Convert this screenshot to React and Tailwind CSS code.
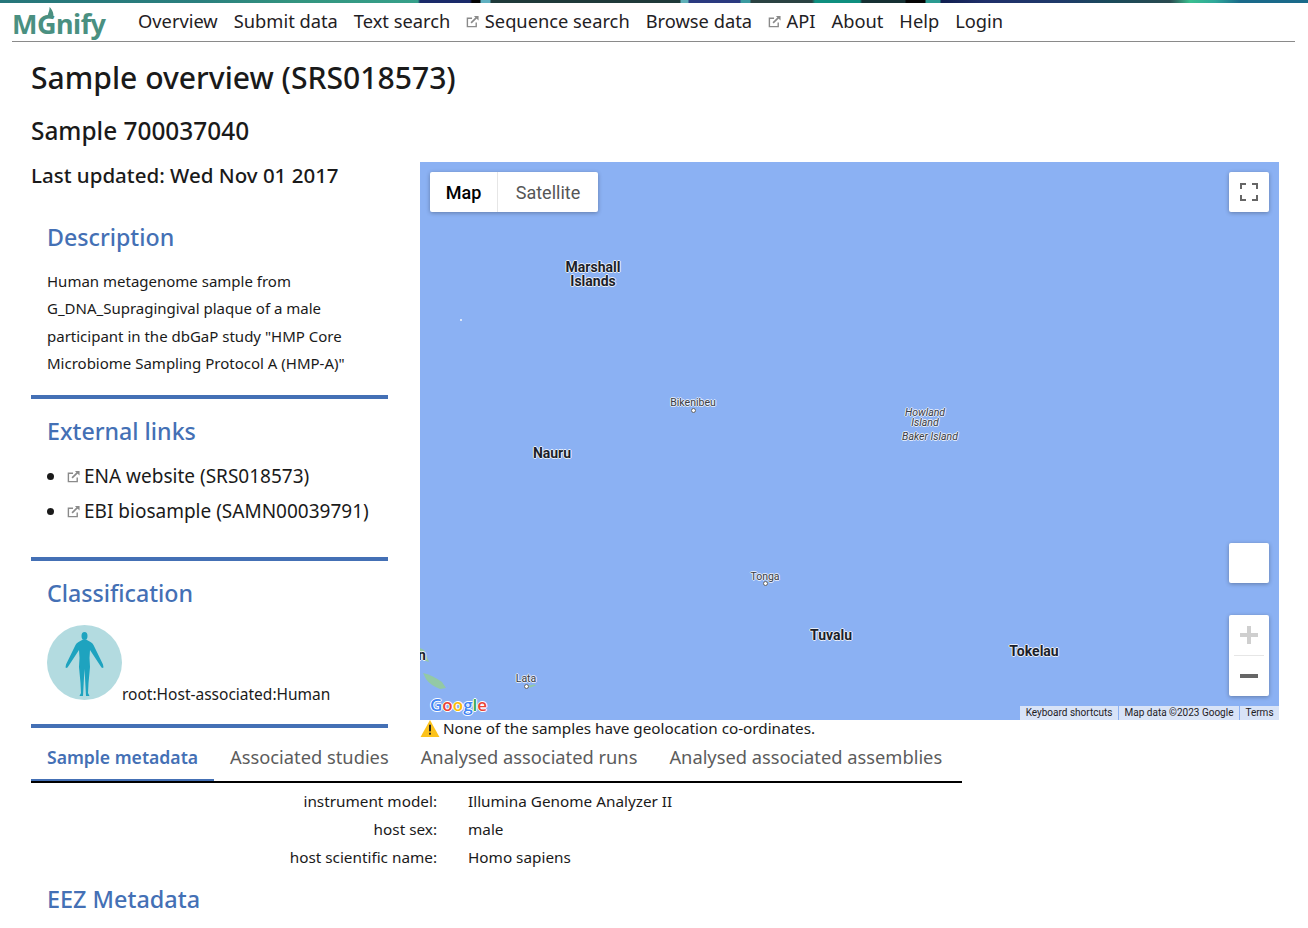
function ExtIcon({ className = "" }) {
  return (
    <svg viewBox="0 0 14 14" className={"inline-block w-[13px] h-[13px] shrink-0 " + className} fill="none">
      <path d="M11 8v4.500H1.500V3.500h5" stroke="#8a8a8a" strokeWidth="1.500" />
      <path d="M5.500 8.500 11.500 2.500" stroke="#8a8a8a" strokeWidth="1.800" />
      <path d="M8.500 1h5v5z" fill="#8a8a8a" />
    </svg>
  );
}

function Logo() {
  return (
    <div className="relative w-[94px] h-[34px] font-bold text-[27px] leading-[34px] text-[#4a9081] whitespace-nowrap">
      <span className="tracking-[-0.5px]">MGnify</span>
      <svg viewBox="0 0 10 12" className="absolute left-[34px] top-[0px] w-[9px] h-[11px]">
        <path d="M2 12C1 8 4 6 4 0c3 3 5 7 4 12z" fill="#4a9081" />
      </svg>
    </div>
  );
}

function NavItem({ children, ext }) {
  return (
    <a className="flex items-center gap-[5.500px] text-[#1f2124]">
      {ext && <ExtIcon className="mt-[1px]" />}
      <span>{children}</span>
    </a>
  );
}

function SectionTitle({ children }) {
  return <h3 className="text-[#4470b5] text-[23.200px] leading-[30px] font-medium">{children}</h3>;
}

function Divider() {
  return <div className="h-[4px] bg-[#4470b5]" />;
}

function HumanIcon() {
  return (
    <svg viewBox="0 0 75 75" className="w-[75px] h-[75px] shrink-0">
      <circle cx="37.500" cy="37.500" r="37.500" fill="#b3dbe0" />
      <ellipse cx="37.500" cy="11" rx="3" ry="4" fill="#1ea3bf" />
      <path
        d="M39 14.500 L43.500 17 Q45.500 18 46.500 20 L56 39.500 L56.500 42.500 L55 43 L53.500 41 L43 25 L42.500 33 L43 42 L41.500 58 L41 68 L42.500 71 L39 71 L38.300 58 L37.500 44 L36.700 58 L36 71 L32.500 71 L34 68 L33.500 58 L32 42 L32.500 33 L32 25 L21.500 41 L20 43 L18.500 42.500 L19 39.500 L28.500 20 Q29.500 18 31.500 17 L36 14.500 Z"
        fill="#1ea3bf"
      />
    </svg>
  );
}

function MapLabel({ x, y, children, size = 14, weight = 700, italic, leading, small }) {
  return (
    <div
      className={
        "absolute text-center whitespace-pre font-['Roboto',sans-serif] [text-shadow:-1px_0_#e8eefa,1px_0_#e8eefa,0_-1px_#e8eefa,0_1px_#e8eefa] " +
        (small ? "text-[#3a3d45]" : "text-[#1b1f2a]")
      }
      style={{
        left: x,
        top: y,
        transform: "translateX(-50%)",
        fontSize: size,
        fontWeight: weight,
        fontStyle: italic ? "italic" : "normal",
        lineHeight: leading ? leading + "px" : undefined,
      }}
    >
      {children}
    </div>
  );
}

function Dot({ x, y }) {
  return (
    <div
      className="absolute w-[5px] h-[5px] rounded-full bg-white border border-[#666]"
      style={{ left: x, top: y }}
    />
  );
}

function MapView() {
  return (
    <div className="relative h-[558px] bg-[#8bb1f3] overflow-hidden font-['Roboto',sans-serif]">
      <svg viewBox="0 0 30 45" className="absolute left-0 top-[486px] w-[30px] h-[45px]">
        <path d="M0 0 L4 2 L9 14 L3 12 L0 7 Z" fill="#93c9a5" />
        <path d="M3 25 Q12 27 22 34 L26 40 L20 41 Q10 37 6 31 Z" fill="#93c9a5" />
      </svg>
      <svg viewBox="0 0 14 4" className="absolute left-[107px] top-[522px] w-[10px] h-[4px]">
        <path d="M0 2l10-2 3 1-8 3z" fill="#93c9a5" />
      </svg>
      <div className="absolute left-[40px] top-[157px] w-[2px] h-[2px] bg-[#dbe6f8]" />

      <div className="absolute left-[10px] top-[10px] flex h-[40px] bg-white rounded-[2px] shadow-[0_1px_4px_rgba(0,0,0,0.3)] text-[18px]">
        <div className="w-[68px] flex items-center justify-center font-medium text-black border-r border-[#e6e6e6]">Map</div>
        <div className="w-[100px] flex items-center justify-center text-[#565656]">Satellite</div>
      </div>
      <div className="absolute right-[10px] top-[10px] w-[40px] h-[40px] bg-white rounded-[2px] shadow-[0_1px_4px_rgba(0,0,0,0.3)] flex items-center justify-center">
        <svg viewBox="0 0 18 18" className="w-[18px] h-[18px]" fill="none" stroke="#666" strokeWidth="2">
          <path d="M1 6V1h5M12 1h5v5M17 12v5h-5M6 17H1v-5" />
        </svg>
      </div>
      <div className="absolute right-[10px] top-[381px] w-[40px] h-[40px] bg-white rounded-[2px] shadow-[0_1px_4px_rgba(0,0,0,0.3)]" />
      <div className="absolute right-[10px] top-[453px] w-[40px] h-[81px] bg-white rounded-[2px] shadow-[0_1px_4px_rgba(0,0,0,0.3)] flex flex-col items-center">
        <svg viewBox="0 0 18 18" className="w-[18px] h-[18px] mt-[11px]" fill="#cfcfcf">
          <path d="M7 0h4v7h7v4h-7v7H7v-7H0V7h7z" />
        </svg>
        <div className="w-[30px] h-px bg-[#e6e6e6] mt-[11px]" />
        <svg viewBox="0 0 18 4" className="w-[18px] h-[4px] mt-[18px]" fill="#666">
          <rect width="18" height="4" />
        </svg>
      </div>

      <MapLabel x={173} y={98} leading={14}>{"Marshall\nIslands"}</MapLabel>
      <MapLabel x={273} y={233} size={10.500} weight={400} small>Bikenibeu</MapLabel>
      <Dot x={271} y={246} />
      <MapLabel x={505} y={246} size={10.500} weight={400} italic leading={10} small>{"Howland\nIsland"}</MapLabel>
      <MapLabel x={510} y={267} size={10.500} weight={400} italic small>Baker Island</MapLabel>
      <MapLabel x={132} y={281}>Nauru</MapLabel>
      <MapLabel x={345} y={407} size={10.500} weight={400} small>Tonga</MapLabel>
      <Dot x={343} y={419} />
      <MapLabel x={411} y={463}>Tuvalu</MapLabel>
      <MapLabel x={614} y={479}>Tokelau</MapLabel>
      <MapLabel x={106} y={509} size={10.500} weight={400} small>Lata</MapLabel>
      <Dot x={104} y={522} />
      <MapLabel x={2} y={483}>n</MapLabel>

      <div className="absolute left-[10px] top-[532px] text-[17px] leading-[22px] font-semibold font-['Open_Sans',sans-serif] [text-shadow:-1px_0_#fff,1px_0_#fff,0_-1px_#fff,0_1px_#fff]">
        <span className="text-[#4285f4]">G</span>
        <span className="text-[#ea4335]">o</span>
        <span className="text-[#fbbc05]">o</span>
        <span className="text-[#4285f4]">g</span>
        <span className="text-[#34a853]">l</span>
        <span className="text-[#ea4335]">e</span>
      </div>

      <div className="absolute right-0 bottom-0 flex gap-px h-[14px] text-[10px] leading-[14px] text-[#1f2124]">
        <div className="w-[98px] bg-[#d8e3f7] text-center">Keyboard shortcuts</div>
        <div className="w-[120px] bg-[#d8e3f7] text-center">Map data ©2023 Google</div>
        <div className="w-[39px] bg-[#d8e3f7] text-center">Terms</div>
      </div>
    </div>
  );
}

const navItems = [
  ["Overview"],
  ["Submit data"],
  ["Text search"],
  ["Sequence search", true],
  ["Browse data"],
  ["API", true],
  ["About"],
  ["Help"],
  ["Login"],
];
const tabs = ["Associated studies", "Analysed associated runs", "Analysed associated assemblies"];
const meta = [
  ["instrument model:", "Illumina Genome Analyzer II"],
  ["host sex:", "male"],
  ["host scientific name:", "Homo sapiens"],
];

export default function App() {
  return (
    <div className="bg-white min-h-[928px] text-[#1a1a1a] font-['Noto_Sans',sans-serif]">
      <div className="h-[3px] bg-[linear-gradient(90deg,#26767a_0px,#2a7f7e_200px,#33957f_300px,#36a08a_418px,#1a2a6a_420px,#1a2a6a_470px,#050505_472px,#050505_480px,#5fb0c0_481px,#5fb0c0_490px,#1f3a3a_491px,#1f3a3a_680px,#5fb0b8_681px,#5fb0b8_688px,#2a3a80_689px,#2a3a80_740px,#3a9aa0_741px,#3a9aa0_750px,#2a4242_751px,#2a4242_812px,#0f8f7f_815px,#0f8f7f_860px,#153033_862px,#153033_905px,#050505_906px,#050505_925px,#2a9a90_926px,#2a9a90_940px,#101f50_941px,#1f2f6a_985px,#1f3a6a_1060px,#1a4a5a_1110px,#2a4a50_1170px,#3ac090_1190px,#2fa89a_1215px,#1a6a8a_1240px,#1a6a8a_1308px)]" />
      <header className="ml-[12px] mr-[13px] h-[39px] border-b border-[#8a8a8a] flex items-start">
        <div className="w-[126px] pt-[4px]">
          <Logo />
        </div>
        <nav className="flex gap-[16px] text-[18.300px] leading-[24px] pt-[6px]">
          {navItems.map(([label, ext]) => (
            <NavItem key={label} ext={ext}>{label}</NavItem>
          ))}
        </nav>
      </header>

      <main className="px-[29px] ml-[2px]">
        <h1 className="text-[30.100px] leading-[36px] font-medium mt-[18px]">Sample overview (SRS018573)</h1>
        <h2 className="text-[24.400px] leading-[30px] font-medium mt-[20px]">Sample 700037040</h2>
        <div className="flex gap-[32px] mt-[16px]">
          <aside className="w-[357px] shrink-0">
            <div className="text-[20.500px] leading-[26px] font-medium">Last updated: Wed Nov 01 2017</div>
            <div className="px-[16px] pt-[34px] pb-[18px]">
              <SectionTitle>Description</SectionTitle>
              <p className="text-[15px] leading-[27.300px] mt-[16px]">
                Human metagenome sample from G_DNA_Supragingival plaque of a male participant in the dbGaP study "HMP Core Microbiome Sampling Protocol A (HMP-A)"
              </p>
            </div>
            <Divider />
            <div className="px-[16px] pt-[17px] pb-[28px]">
              <SectionTitle>External links</SectionTitle>
              <ul className="list-disc pl-[20px] mt-[13px] text-[19px] leading-[35px]">
                <li>
                  <span className="inline-flex items-center gap-[4px]"><ExtIcon />ENA website (SRS018573)</span>
                </li>
                <li>
                  <span className="inline-flex items-center gap-[4px] whitespace-nowrap"><ExtIcon />EBI biosample (SAMN00039791)</span>
                </li>
              </ul>
            </div>
            <Divider />
            <div className="px-[16px] pt-[17px] pb-[24px]">
              <SectionTitle>Classification</SectionTitle>
              <div className="flex items-end mt-[17px]">
                <HumanIcon />
                <span className="text-[15.500px] leading-[22px] mb-[-5px]">root:Host-associated:Human</span>
              </div>
            </div>
            <Divider />
          </aside>
          <div className="flex-1 min-w-0">
            <MapView />
            <div className="flex items-center h-[17px] text-[15.250px] leading-[17px]">
              <svg viewBox="0 0 20 18" className="w-[20px] h-[17px] mr-[3px] shrink-0">
                <path d="M10 0 20 18H0z" fill="#fcc21b" />
                <rect x="9" y="5" width="2" height="7" fill="#222" />
                <rect x="9" y="13.500" width="2" height="2" fill="#222" />
              </svg>
              None of the samples have geolocation co-ordinates.
            </div>
          </div>
        </div>

        <div className="w-[931px] mt-[1px] flex border-b-2 border-black h-[45px] text-[18.300px] text-[#5c5c5c]">
          <div className="px-[16px] h-[43px] shrink-0 whitespace-nowrap border-b-2 border-[#4470b5] text-[#4470b5] text-[17.600px] font-semibold leading-[39px]">
            Sample metadata
          </div>
          {tabs.map((t) => (
            <div key={t} className="px-[16px] shrink-0 leading-[37px] whitespace-nowrap">{t}</div>
          ))}
        </div>

        <div className="mt-[4px] text-[15.300px] leading-[28px] w-[931px]">
          {meta.map(([k, v]) => (
            <div key={k} className="flex">
              <div className="w-[406px] text-right">{k}</div>
              <div className="ml-[31px]">{v}</div>
            </div>
          ))}
        </div>

        <h3 className="ml-[16px] mt-[13px] text-[#4470b5] text-[23.400px] leading-[30px] font-medium">EEZ Metadata</h3>
      </main>
    </div>
  );
}
